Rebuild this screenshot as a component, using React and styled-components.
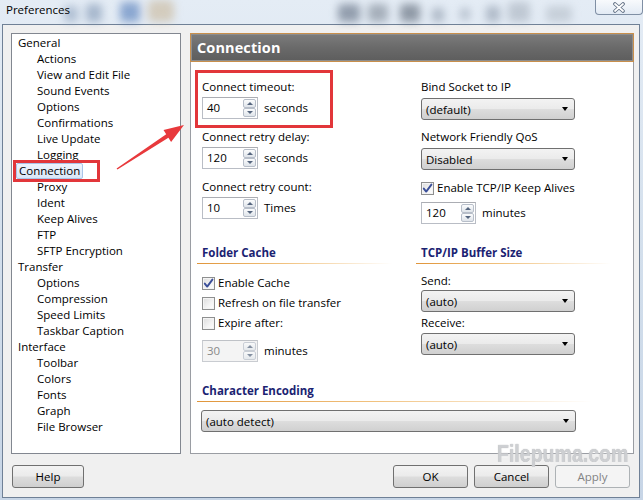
import React from "react";
import styled, { createGlobalStyle } from "styled-components";

const Global = createGlobalStyle`
  html, body { margin: 0; padding: 0; background: #d3dfec; }
  * { box-sizing: border-box; }
`;

const UI_FONT = `"Open Sans", "Noto Sans", "DejaVu Sans", sans-serif`;

const Window = styled.div`
  position: relative;
  width: 643px;
  height: 500px;
  display: flex;
  flex-direction: column;
  padding: 0 3px 2px 2px;
  overflow: hidden;
  background: linear-gradient(180deg, #e4ecf5 0%, #d3dfec 50%, #c7d5e6 100%);
  font-family: ${UI_FONT};
  font-size: 11.5px;
  color: #000;
`;

const TitleBar = styled.div`
  position: relative;
  height: 24px;
  display: flex;
  justify-content: space-between;
  align-items: flex-start;
  padding: 2px 0 0 4px;
`;

const GlassArt = styled.svg`
  position: absolute;
  left: 0;
  top: 0;
  pointer-events: none;
`;

const Title = styled.span`
  position: relative;
  line-height: 16px;
  font-size: 11.5px;
  color: #000;
`;

const CloseButton = styled.div`
  position: relative;
  width: 48px;
  height: 17px;
  margin: -4px -3px 0 0;
  border: 1px solid #7f8fa4;
  border-top: none;
  border-radius: 0 0 4px 4px;
  background: linear-gradient(180deg, rgba(255,255,255,0.85), rgba(226,234,244,0.75));
  display: flex;
  align-items: center;
  justify-content: center;
  padding-top: 2px;
`;

const Client = styled.div`
  flex: 1;
  display: flex;
  flex-direction: column;
  border: 1px solid #6f8096;
  background: #f0f0f0;
  padding: 8px 5px 8px 8px;
`;

const Main = styled.div`
  display: flex;
  gap: 9px;
  height: 421px;
`;

const Tree = styled.ul`
  width: 170px;
  margin: 0;
  list-style: none;
  border: 1px solid #828790;
  background: #fff;
  padding: 1px 0 0 6px;
`;

const TreeItem = styled.li`
  line-height: 16px;
  height: 16px;
  padding-left: ${(p) => (p.$child ? 19 : 0)}px;
  white-space: nowrap;
`;

const Selected = styled.span`
  display: inline-block;
  height: 16px;
  line-height: 14px;
  margin-left: -2px;
  padding: 0 2px;
  border: 1px solid #a9c4e8;
  border-radius: 2px;
  background: linear-gradient(180deg, #eef4fc, #d9e7f8);
`;

const Panel = styled.section`
  flex: 1;
  display: flex;
  flex-direction: column;
  background: #fff;
  border: 1px solid #9a9da3;
  border-top: none;
`;

const PanelHeader = styled.h2`
  margin: 0 -1px;
  height: 29px;
  display: flex;
  align-items: center;
  padding-left: 6px;
  border: 1px solid #c88f4c;
  box-shadow: inset 0 0 0 1px #8d8d8d;
  background: linear-gradient(180deg, #7c7c7c 0%, #6a6a6a 50%, #5d5d5d 100%);
  color: #fff;
  font-size: 14.5px;
  font-weight: 700;
  letter-spacing: 0.1px;
`;

const Body = styled.div`
  display: grid;
  grid-template-columns: 219px 1fr;
  row-gap: 21px;
  padding: 17px 12px 0 11px;
`;

const Stack = styled.div`
  display: flex;
  flex-direction: column;
  align-items: flex-start;
  gap: ${(p) => p.$gap ?? 0}px;
  margin-top: ${(p) => p.$mt ?? 0}px;
  grid-column: ${(p) => (p.$wide ? "1 / span 2" : "auto")};
`;

const Label = styled.div`
  line-height: 16px;
  height: 16px;
  white-space: nowrap;
`;

const Row = styled.div`
  display: flex;
  align-items: center;
  gap: ${(p) => p.$gap ?? 6}px;
  height: ${(p) => p.$h ?? 16}px;
  line-height: 16px;
  white-space: nowrap;
  margin-top: ${(p) => p.$mt ?? 0}px;
`;

const SpinBox = styled.div`
  width: ${(p) => p.$w ?? 56}px;
  height: 22px;
  display: flex;
  align-items: stretch;
  border: 1px solid ${(p) => (p.$disabled ? "#c9ccd1" : "#b9bdc5")};
  border-top-color: ${(p) => (p.$disabled ? "#bfc2c7" : "#abadb3")};
  background: ${(p) => (p.$disabled ? "#f4f4f4" : "#fff")};
  color: ${(p) => (p.$disabled ? "#8a8a8a" : "#000")};
`;

const SpinValue = styled.span`
  flex: 1;
  padding-left: 4px;
  line-height: 20px;
`;

const SpinButtons = styled.div`
  width: 13px;
  margin: 1px 1px 1px 0;
  display: flex;
  flex-direction: column;
`;

const SpinButton = styled.div`
  flex: 1;
  display: flex;
  align-items: center;
  justify-content: center;
  border: 1px solid #b7bec9;
  border-radius: 2px;
  background: linear-gradient(180deg, #fbfcfd, #dfe4ea);
  opacity: ${(p) => (p.$disabled ? 0.7 : 1)};
  &::after {
    content: "";
    border-left: 3px solid transparent;
    border-right: 3px solid transparent;
    ${(p) => (p.$down ? "border-top" : "border-bottom")}: 3px solid #56667f;
  }
`;

const Combo = styled.div`
  width: ${(p) => p.$w}px;
  height: 22px;
  margin-left: ${(p) => p.$ml ?? 0}px;
  display: flex;
  align-items: center;
  justify-content: space-between;
  padding: 0 6px 0 4px;
  border: 1px solid #707070;
  border-radius: 3px;
  background: linear-gradient(180deg, #f3f3f3 0%, #ebebeb 48%, #dddddd 52%, #d0d0d0 100%);
  white-space: nowrap;
  &::after {
    content: "";
    border-left: 3.5px solid transparent;
    border-right: 3.5px solid transparent;
    border-top: 4px solid #000;
  }
`;

const Box = styled.span`
  width: 13px;
  height: 13px;
  flex: none;
  display: inline-flex;
  align-items: center;
  justify-content: center;
  border: 1px solid #8e8f8f;
  background: linear-gradient(135deg, #dcdcdc 0%, #f4f4f4 60%, #ffffff 100%);
  box-shadow: inset 0 0 0 1px #f4f4f4;
`;

const Heading = styled.h3`
  position: relative;
  margin: 0 0 0 -5px;
  padding: 0 0 3px 5px;
  line-height: 16px;
  height: 19px;
  font-size: 11.5px;
  font-weight: 700;
  color: #1b2372;
  white-space: nowrap;
  &::after {
    content: "";
    position: absolute;
    left: 0;
    bottom: 0;
    width: ${(p) => p.$line}px;
    height: 1px;
    background: linear-gradient(90deg, #e0953a 0%, #f1c27f 45%, rgba(255,255,255,0) 100%);
  }
`;

const Footer = styled.div`
  margin-top: 11px;
  height: 23px;
  display: flex;
  justify-content: space-between;
  padding: 0 4px 0 1px;
`;

const Buttons = styled.div`
  display: flex;
  gap: 6px;
`;

const Button = styled.button`
  width: ${(p) => p.$w ?? 75}px;
  height: 23px;
  padding: 0;
  font-family: ${UI_FONT};
  font-size: 11.5px;
  border: 1px solid ${(p) => (p.disabled ? "#adb2b5" : "#707070")};
  border-radius: 3px;
  color: ${(p) => (p.disabled ? "#838383" : "#000")};
  background: ${(p) =>
    p.disabled
      ? "#f4f4f4"
      : "linear-gradient(180deg, #f3f3f3 0%, #ebebeb 48%, #dddddd 52%, #cfcfcf 100%)"};
`;

const Overlay = styled.svg`
  position: absolute;
  left: 0;
  top: 0;
  pointer-events: none;
`;

const Watermark = styled.div`
  position: absolute;
  left: 497px;
  top: 440px;
  font-family: "Liberation Sans", Arial, sans-serif;
  font-weight: 700;
  font-size: 23px;
  line-height: 28px;
  transform: scaleX(0.85);
  transform-origin: left center;
  color: rgba(214, 216, 220, 0.85);
  text-shadow: 0 0 1px rgba(110, 110, 110, 0.7), 0 1px 2px rgba(255, 255, 255, 0.9);
  pointer-events: none;
  white-space: nowrap;
`;

function Check({ on }) {
  return (
    <Box>
      {on && (
        <svg width="11" height="11" viewBox="0 0 11 11">
          <path d="M1.8 5.6 L4.2 8.6 L9.4 1.6" fill="none" stroke="#3b4f99" strokeWidth="1.9" strokeLinecap="round" strokeLinejoin="round" />
        </svg>
      )}
    </Box>
  );
}

function Spin({ value, disabled, w }) {
  return (
    <SpinBox $disabled={disabled} $w={w}>
      <SpinValue>{value}</SpinValue>
      <SpinButtons>
        <SpinButton $disabled={disabled} />
        <SpinButton $disabled={disabled} $down />
      </SpinButtons>
    </SpinBox>
  );
}

const tree = [
  ["General", false],
  ["Actions", true],
  ["View and Edit File", true],
  ["Sound Events", true],
  ["Options", true],
  ["Confirmations", true],
  ["Live Update", true],
  ["Logging", true],
  ["Connection", false, true],
  ["Proxy", true],
  ["Ident", true],
  ["Keep Alives", true],
  ["FTP", true],
  ["SFTP Encryption", true],
  ["Transfer", false],
  ["Options", true],
  ["Compression", true],
  ["Speed Limits", true],
  ["Taskbar Caption", true],
  ["Interface", false],
  ["Toolbar", true],
  ["Colors", true],
  ["Fonts", true],
  ["Graph", true],
  ["File Browser", true],
];

export default function App() {
  return (
    <>
      <Global />
      <Window>
        <TitleBar>
          <GlassArt width="643" height="30">
            <defs>
              <filter id="soft" x="-100%" y="-100%" width="300%" height="300%">
                <feGaussianBlur stdDeviation="4.5" />
              </filter>
            </defs>
            <g filter="url(#soft)" opacity="0.6">
              <rect x="62" y="6" width="14" height="16" rx="3" fill="#8fa3bd" />
              <rect x="84" y="4" width="16" height="18" rx="3" fill="#7f95b3" />
              <rect x="118" y="2" width="20" height="20" rx="4" fill="#4f79b8" />
              <rect x="146" y="0" width="26" height="22" rx="5" fill="#c9b79a" />
              <rect x="336" y="4" width="22" height="18" rx="4" fill="#5d6b7e" />
              <rect x="366" y="4" width="20" height="18" rx="4" fill="#7d8794" />
              <rect x="398" y="4" width="20" height="18" rx="4" fill="#586372" />
              <rect x="430" y="8" width="12" height="14" rx="3" fill="#8b98a9" />
              <rect x="458" y="8" width="10" height="12" rx="3" fill="#9aa6b5" />
              <rect x="484" y="6" width="14" height="16" rx="3" fill="#8d9aab" />
              <rect x="506" y="2" width="22" height="20" rx="4" fill="#a7b1bd" />
              <rect x="544" y="6" width="26" height="16" rx="4" fill="#b4bdc8" />
            </g>
          </GlassArt>
          <Title>Preferences</Title>
          <CloseButton>
            <svg width="14" height="11" viewBox="0 0 14 11">
              <path d="M3 2 L11 9 M11 2 L3 9" stroke="#5f6e82" strokeWidth="3.6" strokeLinecap="round" />
              <path d="M3 2 L11 9 M11 2 L3 9" stroke="#ffffff" strokeWidth="1.8" strokeLinecap="round" />
            </svg>
          </CloseButton>
        </TitleBar>

        <Client>
          <Main>
            <Tree>
              {tree.map(([name, child, sel], i) => (
                <TreeItem key={i} $child={child}>
                  {sel ? <Selected>{name}</Selected> : name}
                </TreeItem>
              ))}
            </Tree>

            <Panel>
              <PanelHeader>Connection</PanelHeader>
              <Body>
                <Stack $gap={10}>
                  <Stack $gap={2}>
                    <Label>Connect timeout:</Label>
                    <Row $h={22}>
                      <Spin value="40" />
                      <span>seconds</span>
                    </Row>
                  </Stack>
                  <Stack $gap={2}>
                    <Label>Connect retry delay:</Label>
                    <Row $h={22}>
                      <Spin value="120" />
                      <span>seconds</span>
                    </Row>
                  </Stack>
                  <Stack $gap={2}>
                    <Label>Connect retry count:</Label>
                    <Row $h={22}>
                      <Spin value="10" />
                      <span>Times</span>
                    </Row>
                  </Stack>
                </Stack>

                <Stack $gap={9}>
                  <Stack $gap={3}>
                    <Label>Bind Socket to IP</Label>
                    <Combo $w={154}>(default)</Combo>
                  </Stack>
                  <Stack $gap={3}>
                    <Label>Network Friendly QoS</Label>
                    <Combo $w={154}>Disabled</Combo>
                  </Stack>
                  <Stack $gap={6} $mt={1}>
                    <Row $gap={3}>
                      <Check on />
                      <span>Enable TCP/IP Keep Alives</span>
                    </Row>
                    <Row $h={22}>
                      <Spin value="120" w={55} />
                      <span>minutes</span>
                    </Row>
                  </Stack>
                </Stack>

                <Stack>
                  <Heading $line={195}>Folder Cache</Heading>
                  <Stack $gap={4} $mt={11}>
                    <Row $gap={3}>
                      <Check on />
                      <span>Enable Cache</span>
                    </Row>
                    <Row $gap={3}>
                      <Check />
                      <span>Refresh on file transfer</span>
                    </Row>
                    <Row $gap={3}>
                      <Check />
                      <span>Expire after:</span>
                    </Row>
                    <Row $h={22} $mt={5}>
                      <Spin value="30" disabled />
                      <span>minutes</span>
                    </Row>
                  </Stack>
                </Stack>

                <Stack>
                  <Heading $line={195}>TCP/IP Buffer Size</Heading>
                  <Stack $gap={1} $mt={9}>
                    <Label>Send:</Label>
                    <Combo $w={154}>(auto)</Combo>
                  </Stack>
                  <Stack $gap={2} $mt={3}>
                    <Label>Receive:</Label>
                    <Combo $w={154}>(auto)</Combo>
                  </Stack>
                </Stack>

                <Stack $wide>
                  <Heading $line={395}>Character Encoding</Heading>
                  <Stack $mt={8}>
                    <Combo $w={375} $ml={-1}>(auto detect)</Combo>
                  </Stack>
                </Stack>
              </Body>
            </Panel>
          </Main>

          <Footer>
            <Button $w={72}>Help</Button>
            <Buttons>
              <Button>OK</Button>
              <Button>Cancel</Button>
              <Button disabled>Apply</Button>
            </Buttons>
          </Footer>
        </Client>

        <Watermark>Filepuma.com</Watermark>

        <Overlay width="643" height="500">
          <rect x="14.5" y="161.5" width="84" height="19" fill="none" stroke="#e2363a" strokeWidth="3" />
          <rect x="196.5" y="71.5" width="135" height="55" fill="none" stroke="#e2363a" strokeWidth="3" />
          <polygon
            points="116.6,168.4 166.2,134.3 163.5,130.1 184,125 171.1,141.9 168.4,137.7 117.4,169.6"
            fill="#e8393c"
          />
        </Overlay>
      </Window>
    </>
  );
}
